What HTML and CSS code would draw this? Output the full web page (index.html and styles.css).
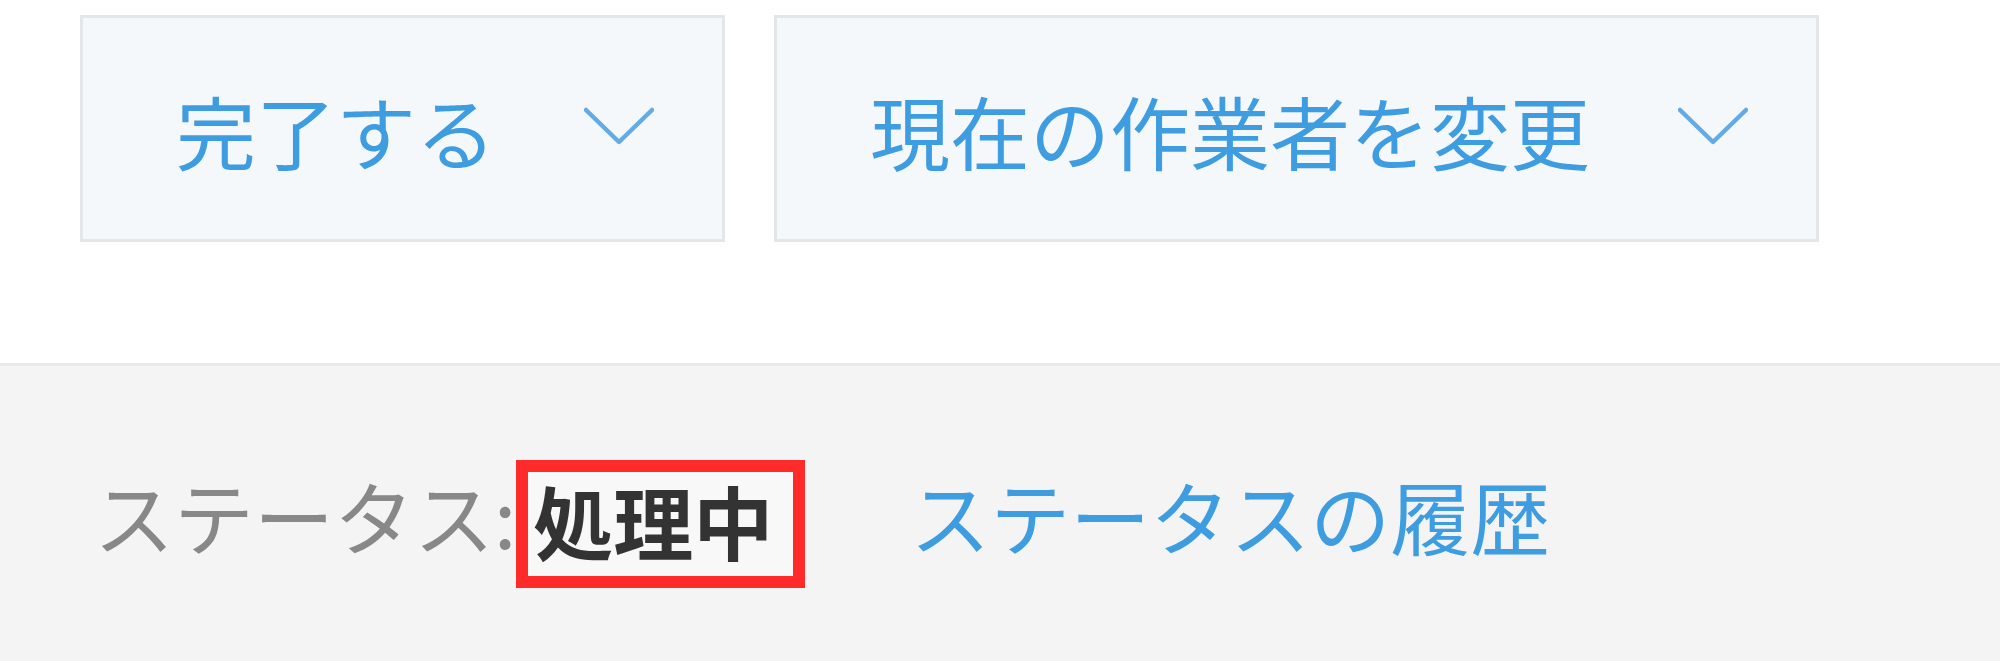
FILE: index.html
```html
<!DOCTYPE html>
<html lang="ja">
<head>
<meta charset="utf-8">
<title>Process management</title>
<link rel="stylesheet" href="styles.css">
</head>
<body>
<div class="actions">
  <button class="action-btn" type="button">
    <span class="action-label">完了する</span>
    <svg class="chevron" width="70" height="38" viewBox="0 0 70 38" aria-hidden="true"><polyline points="2,3 35,35 68,3" fill="none" stroke="#62abe6" stroke-width="4.5" stroke-linejoin="round" stroke-linecap="round"/></svg>
  </button>
  <button class="action-btn" type="button">
    <span class="action-label">現在の作業者を変更</span>
    <svg class="chevron" width="70" height="38" viewBox="0 0 70 38" aria-hidden="true"><polyline points="2,3 35,35 68,3" fill="none" stroke="#62abe6" stroke-width="4.5" stroke-linejoin="round" stroke-linecap="round"/></svg>
  </button>
</div>
<div class="status-bar">
  <span class="status-label">ステータス:</span><span class="status-value">処理中</span>
  <a class="status-history" href="#">ステータスの履歴</a>
</div>
</body>
</html>
```
FILE: styles.css
```css
html, body {
  margin: 0;
  padding: 0;
  background: #ffffff;
}
body {
  width: 2000px;
  height: 661px;
  overflow: hidden;
  font-family: "Noto Sans CJK JP", "Noto Sans", sans-serif;
}
.actions {
  height: 363px;
  box-sizing: border-box;
  padding: 15px 0 0 80px;
  display: flex;
  align-items: flex-start;
  gap: 49px;
}
.action-btn {
  height: 227px;
  box-sizing: border-box;
  display: flex;
  align-items: center;
  gap: 88px;
  padding: 0 68px 0 93px;
  background: #f5f8fa;
  border: 3px solid #e3e7e8;
  font-family: inherit;
  font-size: 80px;
  line-height: 1;
  color: #3d9de0;
  cursor: pointer;
}
.action-label {
  display: block;
  white-space: nowrap;
}
.chevron {
  display: block;
  flex: none;
  margin-top: -6px;
}
.status-bar {
  height: 298px;
  box-sizing: border-box;
  background: #f4f4f4;
  border-top: 3px solid #e6eaeb;
  display: flex;
  align-items: center;
  padding: 0 0 0 94px;
  font-size: 80px;
  line-height: 1;
}
.status-label {
  color: #888888;
}
.status-value {
  color: #333333;
  font-weight: bold;
  background: #f8f8f8;
  border: 12px solid #ff2a2a;
  padding: 7px 20px 17px 5px;
  margin-top: 20px;
}
.status-history {
  color: #3d9de0;
  text-decoration: none;
  margin-left: 105px;
}
```
